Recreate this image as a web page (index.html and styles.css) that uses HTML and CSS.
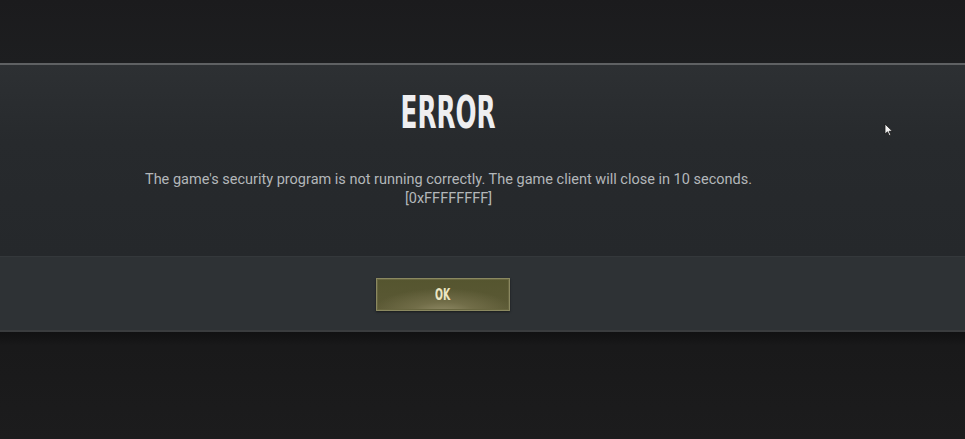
FILE: index.html
```html
<!DOCTYPE html>
<html>
<head>
<meta charset="utf-8">
<link rel="stylesheet" href="styles.css">
</head>
<body>
<div class="top"></div>
<div class="dialog">
  <div class="dialog-body">
    <h1 class="title"><span>ERROR</span></h1>
    <p class="message">The game's security program is not running correctly. The game client will close in 10 seconds.<br>[0xFFFFFFFF]</p>
  </div>
  <div class="dialog-footer">
    <button class="ok-btn"><span>OK</span></button>
  </div>
</div>
<div class="bottom"></div>
<svg class="cursor" width="10" height="14" viewBox="0 0 10 14"><path d="M1 1 L1 11 L3.5 8.8 L5.3 12.6 L6.8 11.9 L5.1 8.3 L8.3 8.1 Z" fill="#f2f2f2" stroke="#1a1a1a" stroke-width="0.8"/></svg>
</body>
</html>
```
FILE: styles.css
```css
html, body {
  margin: 0;
  padding: 0;
  width: 965px;
  height: 439px;
  overflow: hidden;
  background: #1c1c1e;
}
.top {
  height: 63px;
  background: linear-gradient(#1b1b1d, #1d1e20);
}
.dialog {
  border-top: 2px solid #5f6163;
  background: #2a2d30;
}
.dialog-body {
  height: 191px;
  padding-right: 68px;
  background: linear-gradient(180deg, #2d3033 0%, #272a2d 40%, #25282b 100%);
  display: flex;
  flex-direction: column;
  align-items: center;
}
.title {
  margin: 0;
  margin-top: 22px;
  height: 52px;
  font-family: "DejaVu Sans Condensed", "DejaVu Sans", sans-serif;
  font-weight: bold;
  font-size: 44px;
  line-height: 52px;
  color: #eeeef0;
}
.title span {
  display: inline-block;
  transform: scaleX(0.625);
}
.message {
  margin: 0;
  margin-top: 31px;
  font-family: Roboto, "Liberation Sans", sans-serif;
  font-size: 14.5px;
  line-height: 19px;
  color: #b3b7ba;
  text-align: center;
}
.dialog-footer {
  border-top: 1px solid #34383b;
  height: 73px;
  padding-right: 79px;
  background: #2e3235;
  display: flex;
  align-items: center;
  justify-content: center;
  border-bottom: 2px solid #3a3c3e;
}
.ok-btn {
  width: 134px;
  height: 33px;
  margin-top: 1px;
  border: 1px solid #8a8860;
  box-shadow: inset 0 0 0 1px #67653f, 0 1px 2px rgba(0,0,0,0.5);
  background: radial-gradient(ellipse 55% 80% at 50% 110%, #938d69 0%, #716d48 45%, rgba(90,88,52,0) 100%), linear-gradient(#55552f, #5b5935);
  display: flex;
  align-items: center;
  justify-content: center;
  padding: 0;
  font-family: "DejaVu Sans Condensed", "DejaVu Sans", sans-serif;
  font-weight: bold;
  font-size: 16px;
  color: #ece6c4;
}
.ok-btn span {
  display: inline-block;
  transform: scaleX(0.65);
}
.bottom {
  height: 106px;
  background: linear-gradient(#111112 0px, #19191a 14px, #1c1c1d 100%);
}
.cursor {
  position: absolute;
  left: 884px;
  top: 123px;
}
```
